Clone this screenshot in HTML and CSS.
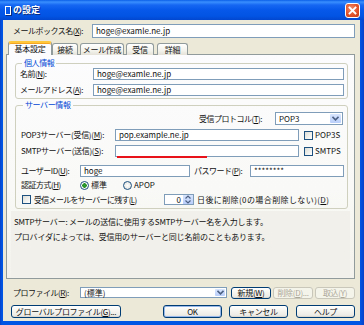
FILE: index.html
```html
<!DOCTYPE html>
<html lang="ja">
<head>
<meta charset="UTF-8">
<title>の設定</title>
<link rel="stylesheet" href="styles.css">
</head>
<body>

<div class="window">
    <div class="titlebar">
        <div class="title"><span class="tofu"></span>の設定</div>
        <div class="close">
            <svg width="13" height="13" viewBox="0 0 13 13"><path d="M3.5 3.5 L9.5 9.5 M9.5 3.5 L3.5 9.5" stroke="#fff" stroke-width="1.8" stroke-linecap="square"/></svg>
        </div>
    </div>

    <div class="frame">
        <div class="row mailbox-row">
            <span class="label mailbox-label">メールボックス名(<u>X</u>):</span>
            <div class="field grow">hoge@examle.ne.jp</div>
        </div>

        <div class="tabs">
            <div class="tab active">基本設定</div>
            <div class="tab tab-conn">接続</div>
            <div class="tab tab-compose">メール作成</div>
            <div class="tab tab-recv">受信</div>
            <div class="tab tab-detail">詳細</div>
        </div>

        <div class="panel">
            <fieldset class="group personal">
                <legend>個人情報</legend>
                <div class="row">
                    <span class="label name-label">名前(<u>N</u>):</span>
                    <div class="field grow">hoge@examle.ne.jp</div>
                </div>
                <div class="row gap4">
                    <span class="label name-label">メールアドレス(<u>A</u>):</span>
                    <div class="field grow">hoge@examle.ne.jp</div>
                </div>
            </fieldset>

            <fieldset class="group server">
                <legend>サーバー情報</legend>
                <div class="row protocol-row">
                    <span class="label">受信プロトコル(<u>T</u>):</span>
                    <div class="combo protocol">
                        <span class="combo-text">POP3</span>
                        <span class="combo-btn"><svg width="7" height="5" viewBox="0 0 7 5"><path d="M0.5 0.8 L3.5 3.8 L6.5 0.8" fill="none" stroke="#4d6185" stroke-width="1.6"/></svg></span>
                    </div>
                </div>
                <div class="row gap4">
                    <span class="label host-label">POP3サーバー(受信)(<u>M</u>):</span>
                    <div class="field host">pop.example.ne.jp</div>
                    <span class="check"></span><span>POP3S</span>
                </div>
                <div class="row gap4">
                    <span class="label host-label">SMTPサーバー(送信)(<u>S</u>):</span>
                    <div class="field host"><span class="error-mark"></span></div>
                    <span class="check"></span><span>SMTPS</span>
                </div>
                <div class="row user-row">
                    <span class="label user-label">ユーザーID(<u>U</u>):</span>
                    <div class="field user">hoge</div>
                    <span class="label pw-label">パスワード(<u>P</u>):</span>
                    <div class="field grow">********</div>
                </div>
                <div class="row auth-row">
                    <span class="label user-label">認証方式(<u>H</u>)</span>
                    <span class="radio on"></span><span class="radio-text">標準</span>
                    <span class="radio apop"></span><span class="radio-text">APOP</span>
                </div>
                <div class="row keep-row">
                    <span class="check keep-check"></span>
                    <span class="label keep-text">受信メールをサーバーに残す(<u>L</u>)</span>
                    <div class="spin">
                        <span class="spin-value">0</span>
                        <span class="spin-btn"><svg width="6" height="9" viewBox="0 0 6 9"><path d="M0.5 3.5 L3 1 L5.5 3.5 M0.5 5.5 L3 8 L5.5 5.5" fill="none" stroke="#4d6185" stroke-width="1.2"/></svg></span>
                    </div>
                    <span class="days-text">日後に削除(0の場合削除しない)(<u>D</u>)</span>
                </div>
            </fieldset>

            <div class="desc">
                <p>SMTPサーバー: メールの送信に使用するSMTPサーバー名を入力します。</p>
                <p>プロバイダによっては、受信用のサーバーと同じ名前のこともあります。</p>
            </div>
        </div>

        <div class="row profile-row">
            <span class="label profile-label">プロファイル(<u>R</u>):</span>
            <div class="combo profile">
                <span class="combo-text">(標準)</span>
                <span class="combo-btn"><svg width="7" height="5" viewBox="0 0 7 5"><path d="M0.5 0.8 L3.5 3.8 L6.5 0.8" fill="none" stroke="#4d6185" stroke-width="1.6"/></svg></span>
            </div>
            <div class="btn small">新規(<u>W</u>)</div>
            <div class="btn small disabled">削除(<u>D</u>)...</div>
            <div class="btn small disabled">取込(<u>Y</u>)</div>
        </div>

        <div class="row buttons-row">
            <div class="btn global">グローバルプロファイル(<u>G</u>)...</div>
            <div class="btn wide default">OK</div>
            <div class="btn wide">キャンセル</div>
            <div class="btn wide help">ヘルプ</div>
        </div>
    </div>
</div>

</body>
</html>
```

FILE: styles.css
```css
* {
    box-sizing: border-box;
}

html, body {
    margin: 0;
    padding: 0;
}

body {
    font-family: "Noto Sans CJK JP", "Noto Sans", sans-serif;
    font-size: 8px;
    line-height: 10px;
    color: #111;
    background: #fff;
}

u {
    text-decoration: underline;
    text-underline-offset: 1px;
}

.window {
    width: 364px;
    height: 325px;
    display: flex;
    flex-direction: column;
    background: linear-gradient(90deg, #0841c8, #0055e5 2px, #0055e5 360px, #0841c8);
}

/* title bar */
.titlebar {
    height: 20px;
    flex: none;
    display: flex;
    align-items: center;
    justify-content: space-between;
    padding: 0 4px 0 5px;
    background: linear-gradient(#0a5fe8, #3a8fff 2px, #1667f2 5px, #0658ea 10px, #0254e4 16px, #0146cf);
}

.title {
    display: flex;
    align-items: center;
    gap: 1px;
    color: #fff;
    font-weight: bold;
    font-size: 9px;
    text-shadow: 1px 1px #0b2c7e;
}

.tofu {
    width: 6px;
    height: 9px;
    border: 1px solid #fff;
    margin-right: 1px;
    box-shadow: 1px 1px #0b2c7e;
}

.close {
    width: 15px;
    height: 15px;
    margin-top: 1px;
    display: flex;
    align-items: center;
    justify-content: center;
    border: 1px solid #fff;
    border-radius: 3px;
    background: radial-gradient(circle at 40% 35%, #f08a6a, #e2532a 55%, #c53a14);
}

/* window body */
.frame {
    flex: 1;
    margin: 0 4px 4px 3px;
    padding: 4px 5px 0 3px;
    background: #ece9d8;
    display: flex;
    flex-direction: column;
}

.row {
    display: flex;
    align-items: center;
    height: 12px;
    white-space: nowrap;
}

.gap4 {
    margin-top: 4px;
}

.label {
    flex: none;
    letter-spacing: -0.5px;
}

.field {
    height: 12px;
    border: 1px solid #7f9db9;
    background: #fff;
    padding: 0 3px;
    line-height: 10px;
    overflow: hidden;
}

.grow {
    flex: 1;
}

.mailbox-row {
    height: 14px;
    padding-left: 7px;
}

.mailbox-row .field {
    height: 14px;
    line-height: 12px;
}

.mailbox-label {
    width: 79px;
}

/* tabs */
.tabs {
    display: flex;
    align-items: flex-end;
    height: 14px;
    margin-top: 3px;
    padding-left: 2px;
    position: relative;
    z-index: 1;
    letter-spacing: -0.3px;
}

.tab {
    height: 12px;
    margin-right: 2px;
    border: 1px solid #919b9c;
    border-bottom: none;
    border-radius: 3px 3px 0 0;
    background: linear-gradient(#fff, #f3f2ec 60%, #e4e2d8);
    text-align: center;
    line-height: 11px;
}

.tab.active {
    width: 44px;
    height: 14px;
    margin-right: 0;
    border-top: 2px solid #ffc83c;
    box-shadow: inset 0 1px #f5a623;
    background: #fcfcfe;
    line-height: 12px;
}

.tab-conn {
    width: 26px;
}

.tab-compose {
    width: 44px;
}

.tab-recv {
    width: 28px;
    margin-right: 3px;
}

.tab-detail {
    width: 31px;
}

.panel {
    height: 225px;
    margin-top: -1px;
    padding: 3px 6px 0 8px;
    border: 1px solid #919b9c;
    background: linear-gradient(#fcfcfe, #f9f9f7 60%, #f3f2ec);
    display: flex;
    flex-direction: column;
}

/* group boxes */
.group {
    margin: 0;
    min-width: 0;
    border: 1px solid #d0d0bf;
    border-radius: 3px;
}

.group legend {
    padding: 0 2px;
    margin-left: 2px;
    color: #0046d5;
    line-height: 10px;
    letter-spacing: -0.4px;
}

.personal {
    padding: 0 3px 2px 4px;
}

.name-label {
    width: 73px;
}

.server {
    margin-top: 1px;
    padding: 0 3px 3px 5px;
}

.protocol-row {
    height: 13px;
    margin-top: 2px;
    justify-content: flex-end;
}

.combo {
    height: 13px;
    display: flex;
    border: 1px solid #7f9db9;
    background: #fff;
}

.combo-text {
    flex: 1;
    padding-left: 3px;
    line-height: 11px;
}

.combo-btn {
    width: 11px;
    margin: 1px;
    display: flex;
    align-items: center;
    justify-content: center;
    border-radius: 1px;
    background: linear-gradient(#d8e5fd, #b9cefa);
}

.protocol {
    width: 68px;
    margin-left: 13px;
    margin-right: 1px;
}

.host-label {
    width: 94px;
    letter-spacing: -0.3px;
}

.field.host {
    width: 184px;
    position: relative;
    overflow: visible;
}

.error-mark {
    position: absolute;
    left: 1px;
    bottom: -2px;
    width: 90px;
    height: 2px;
    background: #e8121b;
}

.check {
    flex: none;
    width: 9px;
    height: 9px;
    margin: 0 2px 0 5px;
    border: 1px solid #1c5180;
    background: linear-gradient(135deg, #dcdcd7, #fff);
}

.user-row {
    margin-top: 8px;
}

.user-label {
    width: 59px;
}

.field.user {
    width: 110px;
}

.pw-label {
    width: 56px;
    margin-left: 4px;
}

.auth-row {
    height: 10px;
    margin-top: 3px;
}

.radio {
    flex: none;
    width: 9px;
    height: 9px;
    border: 1px solid #1c5180;
    border-radius: 50%;
    background: radial-gradient(circle, #fff, #dcdcd7);
    margin-right: 2px;
}

.radio.on {
    background: radial-gradient(circle, #30a530 0, #228a22 2px, #fff 2.5px, #e6e6e0);
}

.radio.apop {
    margin-left: 16px;
}

.keep-row {
    height: 11px;
    margin-top: 4px;
}

.keep-check {
    margin: 0 3px 0 1px;
}

.keep-text {
    width: 130px;
    letter-spacing: -0.7px;
}

.spin {
    height: 11px;
    width: 30px;
    display: flex;
    border: 1px solid #7f9db9;
    background: #fff;
    margin-right: 3px;
}

.spin-value {
    flex: 1;
    text-align: right;
    padding-right: 2px;
    line-height: 9px;
}

.spin-btn {
    width: 10px;
    display: flex;
    align-items: center;
    justify-content: center;
    background: linear-gradient(#d8e5fd, #b9cefa);
}

.days-text {
    letter-spacing: 0.4px;
}

/* help text */
.desc {
    flex: 1;
    margin: 2px -2px 1px -4px;
    padding: 6px 3px 0;
    background: #f1f0ea;
    letter-spacing: -0.2px;
}

.desc p {
    margin: 0 0 5px;
}

/* bottom rows */
.profile-row {
    height: 11px;
    margin-top: 8px;
    padding-left: 7px;
}

.profile-label {
    width: 67px;
}

.profile {
    width: 148px;
    height: 11px;
    margin-right: 2px;
}

.profile .combo-text {
    line-height: 9px;
}

.profile .combo-btn {
    width: 10px;
}

.btn {
    height: 13px;
    border: 1px solid #003c74;
    border-radius: 3px;
    background: linear-gradient(#fff, #f4f3ee 50%, #ecebe6 85%, #d6d0c5);
    text-align: center;
    line-height: 11px;
    flex: none;
    letter-spacing: -0.3px;
}

.btn.small {
    width: 40px;
    height: 12px;
    line-height: 10px;
    margin-left: 2px;
}

.btn.disabled {
    color: #aca899;
    border-color: #c9c7ba;
    background: #f5f4ea;
}

.buttons-row {
    height: 13px;
    margin-top: 7px;
    padding-left: 5px;
}

.btn.global {
    width: 110px;
    margin-right: 42px;
}

.btn.wide {
    width: 59px;
    margin-right: 7px;
}

.btn.default {
    box-shadow: inset 0 0 0 1px #98b8ea;
}

.btn.help {
    margin-left: 1px;
}
```
